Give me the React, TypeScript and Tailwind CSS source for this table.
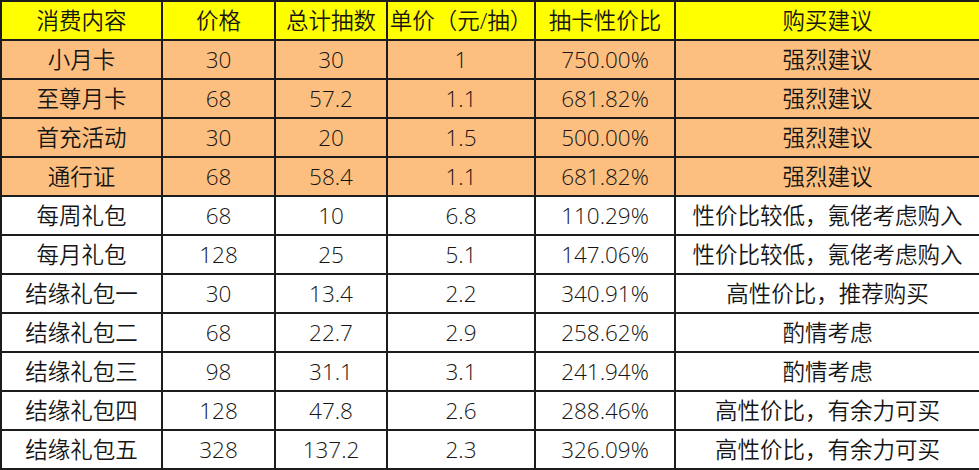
import React from 'react';

// Columns: content, price, total draws, unit price, value ratio, advice
const headers = ['消费内容', '价格', '总计抽数', '单价（元/抽）', '抽卡性价比', '购买建议'];

const rows: { cells: string[]; hot: boolean }[] = [
  { cells: ['小月卡', '30', '30', '1', '750.00%', '强烈建议'], hot: true },
  { cells: ['至尊月卡', '68', '57.2', '1.1', '681.82%', '强烈建议'], hot: true },
  { cells: ['首充活动', '30', '20', '1.5', '500.00%', '强烈建议'], hot: true },
  { cells: ['通行证', '68', '58.4', '1.1', '681.82%', '强烈建议'], hot: true },
  { cells: ['每周礼包', '68', '10', '6.8', '110.29%', '性价比较低，氪佬考虑购入'], hot: false },
  { cells: ['每月礼包', '128', '25', '5.1', '147.06%', '性价比较低，氪佬考虑购入'], hot: false },
  { cells: ['结缘礼包一', '30', '13.4', '2.2', '340.91%', '高性价比，推荐购买'], hot: false },
  { cells: ['结缘礼包二', '68', '22.7', '2.9', '258.62%', '酌情考虑'], hot: false },
  { cells: ['结缘礼包三', '98', '31.1', '3.1', '241.94%', '酌情考虑'], hot: false },
  { cells: ['结缘礼包四', '128', '47.8', '2.6', '288.46%', '高性价比，有余力可买'], hot: false },
  { cells: ['结缘礼包五', '328', '137.2', '2.3', '326.09%', '高性价比，有余力可买'], hot: false },
];

const cellBase =
  'h-[39px] flex items-center justify-center border-r-2 border-b-2 border-[#1c1c1c] text-[22.5px] font-[350] text-[#151515] whitespace-nowrap';

export default function App() {
  return (
    <div
      className="w-[979px] h-[470px] bg-white"
      style={{ fontFamily: '"Open Sans", "Noto Sans CJK SC", sans-serif' }}
    >
      <div className="w-[979px] grid grid-cols-[161px_113px_112px_148px_140px_305px] border-l-2 border-t-2 border-[#1c1c1c]">
        {headers.map((h) => (
          <div key={h} className={`${cellBase} h-[38px] bg-[#ffff00]`}>
            {h}
          </div>
        ))}
        {rows.map((r, i) =>
          r.cells.map((c, j) => (
            <div
              key={`${i}-${j}`}
              className={`${cellBase} ${r.hot ? 'bg-[#fdbf80]' : 'bg-white'}`}
            >
              {c}
            </div>
          ))
        )}
      </div>
    </div>
  );
}
